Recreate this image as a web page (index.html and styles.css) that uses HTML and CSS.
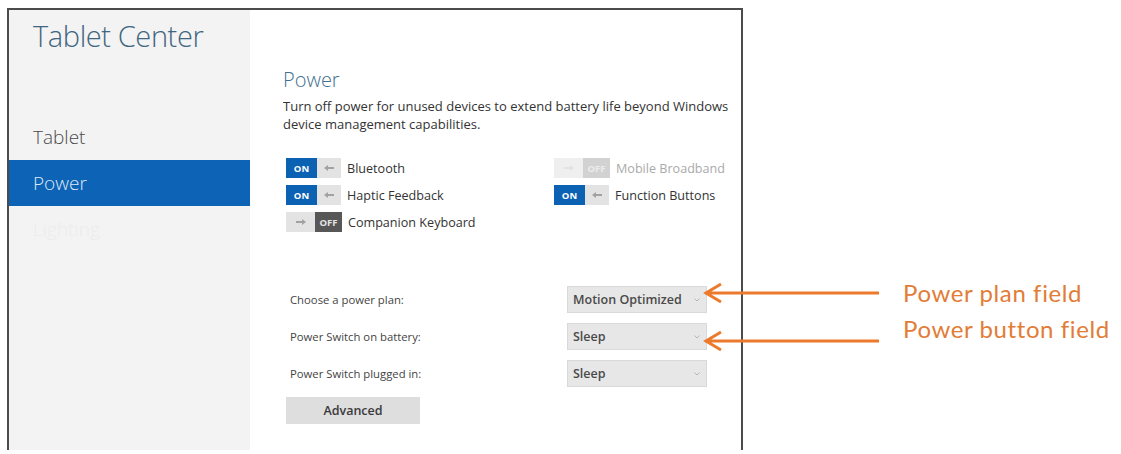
FILE: index.html
```html
<!DOCTYPE html>
<html lang="en">
<head>
<meta charset="utf-8">
<title>Tablet Center - Power</title>
<link rel="stylesheet" href="styles.css">
</head>
<body>
<div class="window">
  <aside class="sidebar">
    <h1 class="app-title">Tablet Center</h1>
    <nav class="nav">
      <div class="nav-item">Tablet</div>
      <div class="nav-item selected">Power</div>
      <div class="nav-item faded">Lighting</div>
    </nav>
  </aside>
  <main class="content">
    <h2 class="section-title">Power</h2>
    <p class="description">Turn off power for unused devices to extend battery life beyond Windows device management capabilities.</p>

    <div class="toggles">
      <div class="toggle-row">
        <span class="switch on"><span class="knob-label">ON</span><span class="track"><svg class="arrow" viewBox="0 0 10 6"><path d="M0 3 L4 0 L4 2 L10 2 L10 4 L4 4 L4 6 Z"/></svg></span></span>
        <span class="toggle-label">Bluetooth</span>
      </div>
      <div class="toggle-row disabled">
        <span class="switch off"><span class="track"><svg class="arrow" viewBox="0 0 10 6"><path d="M10 3 L6 0 L6 2 L0 2 L0 4 L6 4 L6 6 Z"/></svg></span><span class="knob-label">OFF</span></span>
        <span class="toggle-label">Mobile Broadband</span>
      </div>
      <div class="toggle-row">
        <span class="switch on"><span class="knob-label">ON</span><span class="track"><svg class="arrow" viewBox="0 0 10 6"><path d="M0 3 L4 0 L4 2 L10 2 L10 4 L4 4 L4 6 Z"/></svg></span></span>
        <span class="toggle-label">Haptic Feedback</span>
      </div>
      <div class="toggle-row">
        <span class="switch on"><span class="knob-label">ON</span><span class="track"><svg class="arrow" viewBox="0 0 10 6"><path d="M0 3 L4 0 L4 2 L10 2 L10 4 L4 4 L4 6 Z"/></svg></span></span>
        <span class="toggle-label">Function Buttons</span>
      </div>
      <div class="toggle-row">
        <span class="switch off"><span class="track"><svg class="arrow" viewBox="0 0 10 6"><path d="M10 3 L6 0 L6 2 L0 2 L0 4 L6 4 L6 6 Z"/></svg></span><span class="knob-label">OFF</span></span>
        <span class="toggle-label">Companion Keyboard</span>
      </div>
    </div>

    <div class="form">
      <label class="form-label">Choose a power plan:</label>
      <div class="select"><span>Motion Optimized</span><svg class="chev" viewBox="0 0 6 4"><path d="M0.5 0.5 L3 3 L5.5 0.5"/></svg></div>
      <label class="form-label">Power Switch on battery:</label>
      <div class="select"><span>Sleep</span><svg class="chev" viewBox="0 0 6 4"><path d="M0.5 0.5 L3 3 L5.5 0.5"/></svg></div>
      <label class="form-label">Power Switch plugged in:</label>
      <div class="select"><span>Sleep</span><svg class="chev" viewBox="0 0 6 4"><path d="M0.5 0.5 L3 3 L5.5 0.5"/></svg></div>
    </div>

    <button class="btn">Advanced</button>
  </main>
</div>

<svg class="callout-arrow arrow-plan" viewBox="0 0 178 22"><path d="M2 11 H176 M18 2 L3 11 L18 20"/></svg>
<span class="callout-text text-plan">Power plan field</span>
<svg class="callout-arrow arrow-button" viewBox="0 0 178 22"><path d="M2 11 H176 M18 2 L3 11 L18 20"/></svg>
<span class="callout-text text-button">Power button field</span>
</body>
</html>
```
FILE: styles.css
```css
html, body {
  margin: 0;
  padding: 0;
  background: #ffffff;
}

body {
  position: relative;
  width: 1121px;
  height: 454px;
  overflow: hidden;
  font-family: "Open Sans", "Noto Sans", sans-serif;
  color: #333333;
}

.window {
  margin: 8px 0 0 7px;
  width: 736px;
  height: 442px;
  border: 2px solid #4b4b4b;
  border-bottom: none;
  display: flex;
  box-sizing: border-box;
}

/* ---------- sidebar ---------- */
.sidebar {
  width: 241px;
  background: #f3f3f3;
  display: flex;
  flex-direction: column;
}

.app-title {
  margin: 0;
  padding: 9px 0 0 24px;
  height: 95px;
  font-size: 29px;
  line-height: 34px;
  font-weight: 300;
  color: #3f6680;
  letter-spacing: -0.4px;
  box-sizing: content-box;
}

.nav {
  display: flex;
  flex-direction: column;
}

.nav-item {
  height: 46px;
  line-height: 46px;
  padding-left: 24px;
  font-size: 19px;
  font-weight: 300;
  color: #4a4a4a;
}

.nav-item.selected {
  background: #0d63b6;
  color: #dfe9f5;
}

.nav-item.faded {
  color: #ececec;
}

/* ---------- content ---------- */
.content {
  flex: 1;
  padding: 56px 0 0 33px;
  display: flex;
  flex-direction: column;
  align-items: flex-start;
}

.section-title {
  margin: 0;
  font-size: 20px;
  line-height: 28px;
  font-weight: 300;
  color: #426f8e;
}

.description {
  margin: 3px 0 0 0;
  width: 452px;
  font-size: 13px;
  line-height: 18px;
  color: #333333;
}

.toggles {
  margin: 25px 0 0 3px;
  display: grid;
  grid-template-columns: 268px auto;
  row-gap: 7px;
}

.toggle-row {
  display: flex;
  align-items: center;
  height: 20px;
}

.switch {
  display: flex;
  height: 20px;
  margin-right: 6px;
}

.knob-label {
  display: flex;
  align-items: center;
  justify-content: center;
  font-size: 9.5px;
  font-weight: 700;
  color: #ffffff;
}

.track {
  display: flex;
  align-items: center;
  justify-content: center;
  background: #e3e3e3;
}

.arrow {
  width: 10px;
  height: 6px;
  fill: #a2a2a2;
}

.switch.on .knob-label {
  width: 31px;
  background: #0b62b2;
}
.switch.on .track {
  width: 24px;
}

.switch.off .track {
  width: 29px;
}
.switch.off .knob-label {
  width: 27px;
  background: #575757;
  color: #e6e6e6;
}

.toggle-label {
  font-size: 12.6px;
  color: #333333;
}

.toggle-row.disabled .track {
  background: #efefef;
}
.toggle-row.disabled .arrow {
  fill: #e2e2e2;
}
.toggle-row.disabled .knob-label {
  background: #d2d2d2;
  color: #ececec;
}
.toggle-row.disabled .toggle-label {
  color: #aaaaaa;
}

.form {
  margin: 54px 0 0 3px;
  display: grid;
  grid-template-columns: 281px 140px;
  row-gap: 10px;
  align-items: center;
}

.form-label {
  padding-left: 4px;
  font-size: 11.3px;
  color: #444444;
}

.select {
  height: 27px;
  box-sizing: border-box;
  background: #e7e7e7;
  border: 1px solid #d9d9d9;
  display: flex;
  align-items: center;
  justify-content: space-between;
  padding: 0 6px 0 5px;
  font-size: 12.5px;
  font-weight: 600;
  color: #4a4a4a;
}

.chev {
  width: 6px;
  height: 4px;
  fill: none;
  stroke: #b5b5b5;
  stroke-width: 1;
}

.btn {
  margin: 10px 0 0 3px;
  width: 134px;
  height: 27px;
  border: none;
  background: #dedede;
  font-family: "Open Sans", "Noto Sans", sans-serif;
  font-size: 12.5px;
  font-weight: 600;
  color: #3a3a3a;
  padding: 0;
}

/* ---------- annotations (overlay) ---------- */
.callout-arrow {
  position: absolute;
  left: 703px;
  width: 178px;
  height: 22px;
  fill: none;
  stroke: #ec7a2c;
  stroke-width: 3;
  stroke-linejoin: miter;
}

.arrow-plan {
  top: 282px;
}

.arrow-button {
  top: 330px;
}

.callout-text {
  position: absolute;
  left: 903px;
  font-family: "Lato", "Open Sans", sans-serif;
  font-size: 24px;
  line-height: 28px;
  letter-spacing: 0.6px;
  color: #e27c36;
  white-space: nowrap;
}

.text-plan {
  top: 279px;
}

.text-button {
  top: 315px;
}
```
